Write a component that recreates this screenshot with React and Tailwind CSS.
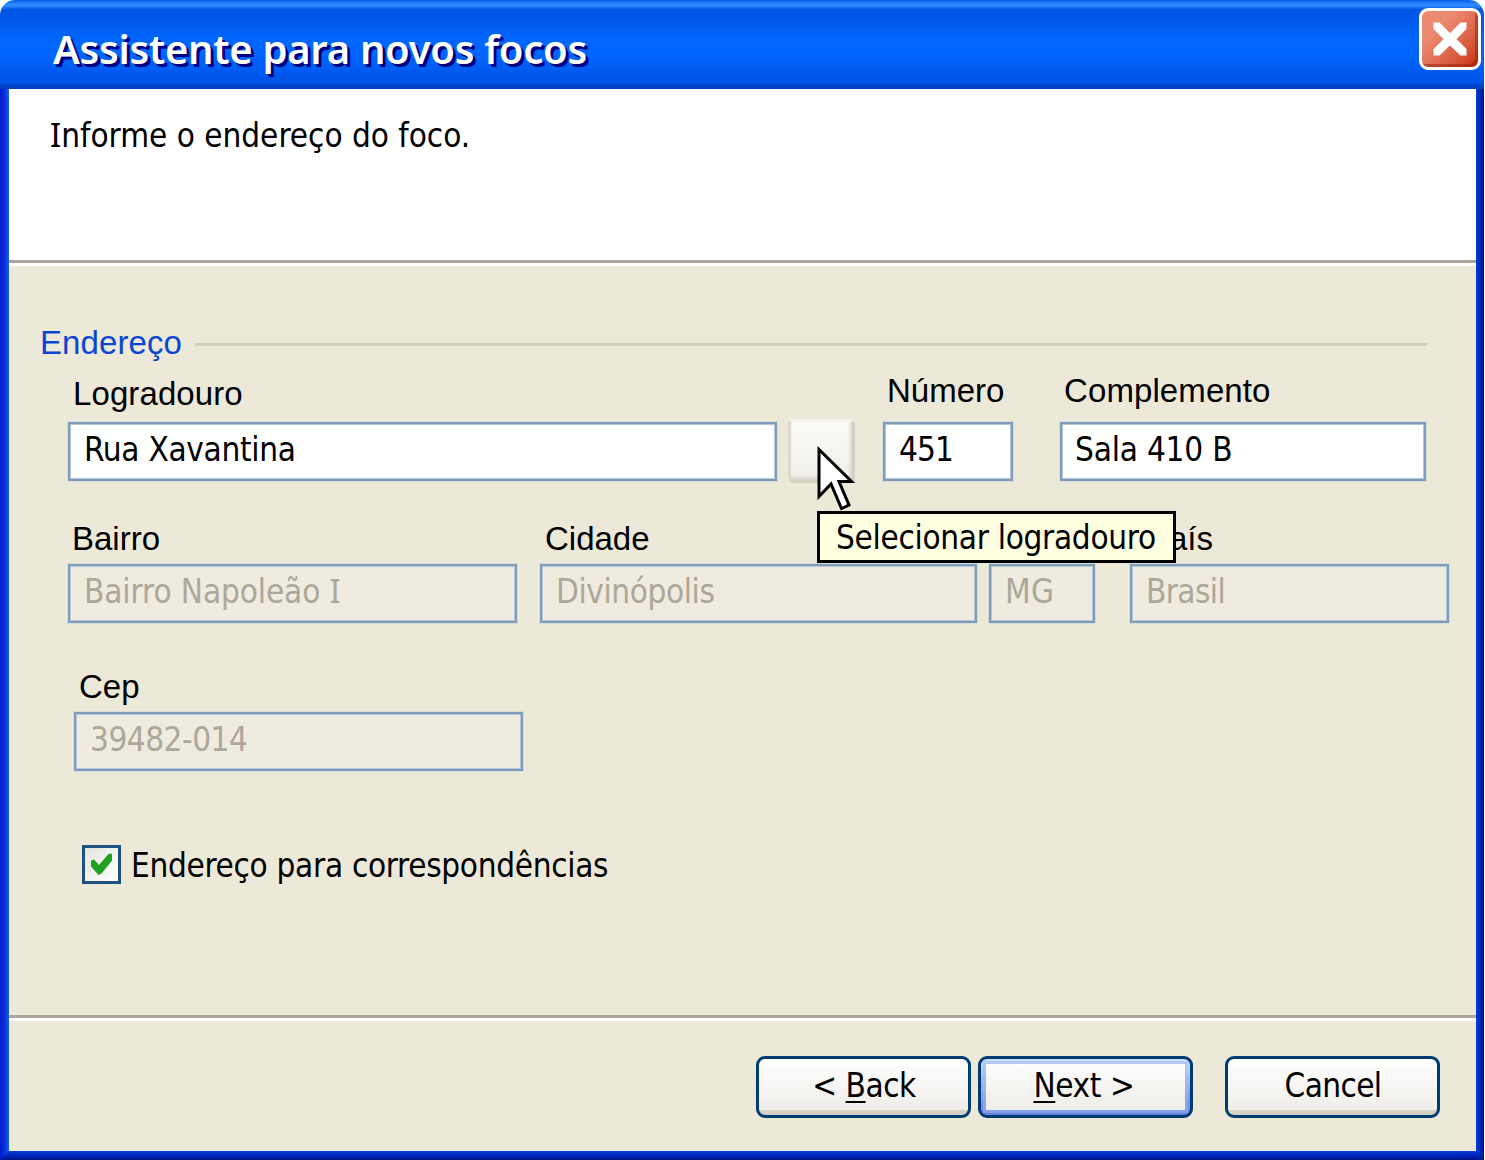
import React from 'react';
import clsx from 'clsx';

const ui = "text-[33px] whitespace-nowrap [font-family:'DejaVu_Sans_Condensed','DejaVu_Sans',sans-serif] [font-stretch:condensed]";
const label = "text-[33px] whitespace-nowrap [font-family:'Liberation_Sans',Arial,sans-serif]";
const box = 'h-[59px] border-2 border-[#7f9db9] leading-[52px] shadow-[0_0_0_1px_rgba(200,214,222,0.6),inset_0_0_0_1px_#b4c7da]';

function SerifI() {
  return <span className="leading-none [font-family:'Noto_Sans',sans-serif]">I</span>;
}

function Field({ name, children, className, labelClass, textClass = 'pl-[14px]', disabled }) {
  return (
    <div className={clsx('flex flex-col', className)}>
      <label className={clsx(label, 'h-10 leading-10', labelClass)}>{name}</label>
      <div className={clsx(ui, box, disabled ? 'bg-[#efebdf] text-[#aca899]' : 'bg-white text-black', textClass)}>
        {children}
      </div>
    </div>
  );
}

function Divider() {
  return <div className="h-[6px] shrink-0 border-t-[3px] border-[#aca39a] bg-white" />;
}

function Button({ children, primary, className }) {
  return (
    <button
      className={clsx(
        'h-[62px] w-[215px] rounded-[9px] border-[3px] border-[#003c74]',
        primary
          ? 'bg-linear-to-b from-[#cbdffc] to-[#6480e0] p-[5px]'
          : 'bg-[linear-gradient(to_bottom,#ffffff,#eeede9_51px,#d9d5cb_51px,#d2cec4)]',
        className
      )}
    >
      <span
        className={clsx(
          ui,
          'flex items-center justify-center',
          primary
            ? 'h-[46px] bg-linear-to-b from-[#fcfcfb] to-[#eeede8] pb-[2px] pr-[3px] tracking-[-0.4px] leading-[44px] shadow-[0_0_0_3px_rgba(160,185,235,0.5)]'
            : 'h-[56px] pb-[2px] pl-px'
        )}
      >
        {children}
      </span>
    </button>
  );
}

function Cursor() {
  return (
    <svg className="absolute left-[28px] top-[27px] z-20" width="40" height="66" viewBox="0 0 40 66">
      <path d="M3 3.500 L3 50.500 L15 38 L25.500 62.500 L33 59 L23 35.500 L35.500 35.500 Z" fill="#fff" stroke="#000" strokeWidth="3" />
    </svg>
  );
}

export default function App() {
  return (
    <div className="flex h-[1160px] w-[1485px] flex-col overflow-hidden bg-white text-black">
      <header className="flex h-[89px] w-[1484px] shrink-0 items-start justify-between rounded-t-[15px] bg-[linear-gradient(to_bottom,#0a5fe6_0px,#1470f2_2px,#2b8cff_4px,#2b8cff_6px,#1268ee_8px,#0055e2_10px,#0058ea_18px,#0066ff_40px,#0066ff_52px,#0056ea_78px,#0054e8_83px,#0045d4_84px,#0340b8_89px)] pl-[53px] pr-[3px]">
        <h1 className="h-[60px] whitespace-nowrap pt-[19px] text-[40px] font-semibold leading-[60px] tracking-[-0.28px] text-white [font-family:'Noto_Sans',sans-serif] [text-shadow:3px_3px_0_#00007f]">
          Assistente para novos focos
        </h1>
        <button className="mt-[8px] flex size-[62px] items-center justify-center rounded-[9px] border-[3px] border-white bg-linear-to-br from-[#ec8a72] from-30% to-[#c8330a] shadow-[inset_-3px_-3px_0_rgba(150,30,5,0.5)]">
          <svg width="34" height="34" viewBox="0 0 34 34">
            <path d="M0.500 0.500 H6.500 L17 11 L27.500 0.500 H33.500 V7 L23.500 17 L33.500 27 V33.500 H27.500 L17 23.500 L6.500 33.500 H0.500 V27 L10.500 17 L0.500 7 Z" fill="#fff" />
          </svg>
        </button>
      </header>

      <div className="flex h-[1062px] w-[1484px]">
        <div className="w-[9px] shrink-0 bg-linear-to-r from-[#0019cf] via-[#0831d9] to-[#1660e8]" />
        <main className="flex min-w-0 flex-1 flex-col bg-[#ece9d8]">
          <section className="h-[171px] shrink-0 bg-white pl-[41px] pt-[26px]">
            <p className={clsx(ui, 'leading-[42px] tracking-[-0.02px]')}>
              <SerifI />nforme o endereço do foco.
            </p>
          </section>
          <Divider />

          <section className="flex flex-1 flex-col pt-[57px]">
            <div className="flex h-10 items-center pl-[31px]">
              <h2 className={clsx(label, 'leading-10 tracking-[0.1px] text-[#0c46d0]')}>Endereço</h2>
              <div className="ml-[13px] mt-[2px] h-[3px] w-[1232px] bg-[#d0d0bf]" />
            </div>

            <div className="flex h-[118px] items-end pl-[59px]">
              <Field name="Logradouro" className="w-[709px]" labelClass="mb-[8px] pl-[5px] tracking-[0.1px]" textClass="pl-[14px] tracking-[-0.3px]">
                Rua Xavantina
              </Field>
              <div className="relative ml-[11px] mb-[-2px] h-[64px] w-[67px]">
                <button
                  className="h-[64px] w-[67px] rounded-[6px] border-[3px] border-t-[#f5f3ed] border-l-[#dedacd] border-r-[#d3cfc1] border-b-[#d3cfc1] bg-linear-to-b from-[#fbfbf8] to-[#f0eee9] shadow-[inset_-2px_-3px_3px_rgba(190,184,168,0.45)]"
                  aria-label="Selecionar logradouro"
                />
                <Cursor />
                <div className={clsx(ui, 'absolute left-[29px] top-[92px] z-10 flex h-[52px] w-[359px] items-start border-[3px] border-black bg-[#ffffe1] pl-[16px] leading-[47px] tracking-[-0.3px]')}>
                  Selecionar logradouro
                </div>
              </div>
              <Field name="Número" className="ml-[28px] w-[130px]" labelClass="mb-[11px] pl-[4px]" textClass="pl-[14px] tracking-[-0.9px]">
                451
              </Field>
              <Field name="Complemento" className="ml-[47px] w-[366px]" labelClass="mb-[11px] pl-[4px] tracking-[0.1px]" textClass="pl-[13px] tracking-[-0.2px]">
                Sala 410 B
              </Field>
            </div>

            <div className="flex h-[142px] items-end pl-[59px]">
              <Field name="Bairro" className="w-[449px]" labelClass="mb-[5px] pl-[4px]" textClass="pl-[14px] tracking-[-0.1px]" disabled>
                Bairro Napoleão <SerifI />
              </Field>
              <Field name="Cidade" className="ml-[23px] w-[437px]" labelClass="mb-[5px] pl-[5px]" textClass="pl-[14px] tracking-[-0.4px]" disabled>
                Divinópolis
              </Field>
              <div className={clsx(ui, box, 'ml-[12px] w-[106px] bg-[#efebdf] pl-[14px] tracking-[0.3px] text-[#aca899]')}>
                MG
              </div>
              <Field name="País" className="ml-[35px] w-[319px]" labelClass="mb-[5px] pl-[17px]" textClass="pl-[14px] tracking-[-0.6px]" disabled>
                Brasil
              </Field>
            </div>

            <div className="flex h-[148px] items-end pl-[65px]">
              <Field name="Cep" className="w-[449px]" labelClass="mb-[5px] pl-[5px]" textClass="pl-[14px] tracking-[-0.5px]" disabled>
                39482-014
              </Field>
            </div>

            <div className="mt-[74px] flex h-[39px] items-center pl-[73px]">
              <span className="flex size-[39px] items-center justify-center border-[3px] border-[#1c5180] bg-linear-to-br from-[#e4e4de] to-white">
                <svg width="23" height="23" viewBox="0 0 23 23">
                  <path d="M1 7.500 L4 6.500 L9 12 L18.500 1 L22 0.500 V7.500 L11.500 20.500 L8.500 22 L1 13.500 Z" fill="#21a121" />
                </svg>
              </span>
              <span className={clsx(ui, 'ml-[10px] mt-px leading-[39px] tracking-[-0.31px]')}>Endereço para correspondências</span>
            </div>
          </section>

          <Divider />
          <footer className="flex h-[130px] shrink-0 items-start justify-end pr-[36px] pt-[35px]">
            <Button><span className="tracking-[-0.5px]">&lt;&nbsp;<u className="decoration-2 underline-offset-[4px]">B</u>ack</span></Button>
            <Button primary className="ml-[7px]"><u className="decoration-2 underline-offset-[4px]">N</u>ext&nbsp;&gt;</Button>
            <Button className="ml-[32px]"><span className="tracking-[-0.6px]">Cancel</span></Button>
          </footer>
        </main>
        <div className="w-[8px] shrink-0 bg-linear-to-r from-[#0840d8] via-[#0024bb] to-[#00138c]" />
      </div>

      <div className="flex h-[9px] w-[1484px] bg-linear-to-b from-[#0840d8] via-[#0024bb] to-[#00138c]">
        <div className="w-[9px] bg-linear-to-r from-[#0019cf] via-[#0831d9] to-[#1660e8] [clip-path:polygon(0_0,100%_0,0_100%)]" />
        <div className="ml-auto w-[8px] bg-linear-to-r from-[#0840d8] via-[#0024bb] to-[#00138c] [clip-path:polygon(0_0,100%_0,100%_100%)]" />
      </div>
    </div>
  );
}
